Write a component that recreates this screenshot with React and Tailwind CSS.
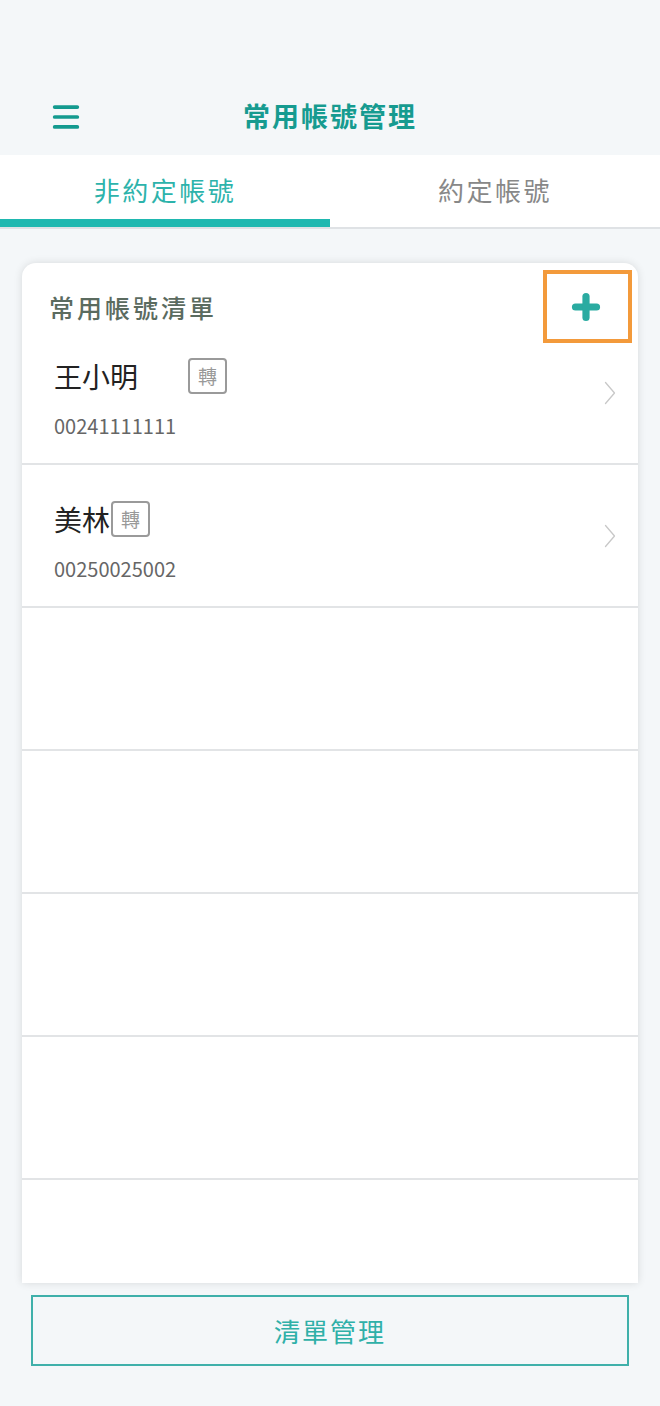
import { Menu, Plus } from 'lucide-react';

const accounts = [
    { name: '王小明', no: '00241111111', gap: 'ml-[50px]' },
    { name: '美林', no: '00250025002', gap: 'ml-[1px]' },
];

const Chevron = () => (
    <svg width="12" height="24" viewBox="0 0 12 24" fill="none" className="text-[#c8c8c8]">
        <path d="M1.5 1.5 L10.5 12 L1.5 22.5" stroke="currentColor" strokeWidth="1.3" strokeLinecap="round" strokeLinejoin="round" />
    </svg>
);

const Row = ({ item }) => (
    <div className="h-[143px] border-b-2 border-[#e2e4e6] flex items-center justify-between pl-[32px] pr-[22px]">
        {item ? (
            <div className="flex flex-col pt-[8px]">
                <div className="flex items-center h-[36px]">
                    <span className="text-[28px] text-[#222] leading-none">{item.name}</span>
                    <span className={`${item.gap} w-[39px] h-[36px] border-2 border-[#9a9a9a] rounded-[4px] flex items-center justify-center text-[19px] text-[#999] leading-none`}>
                        轉
                    </span>
                </div>
                <div className="mt-[22px] text-[20px] text-[#666] leading-none">{item.no}</div>
            </div>
        ) : <div />}
        {item && <Chevron />}
    </div>
);

export default function App() {
    const rows = [...accounts, null, null, null, null, null];

    return (
        <div
            className="h-[1406px] w-[660px] bg-[#f4f7f9] flex flex-col overflow-hidden"
            style={{ fontFamily: "'Noto Sans CJK TC', 'Noto Sans', sans-serif" }}
        >
            {/* Top bar */}
            <div className="h-[155px] shrink-0 relative flex items-end justify-center pb-[19px]">
                <Menu size={34} strokeWidth={2.6} className="absolute left-[49px] top-[100px] text-[#139a8f]" />
                <h1 className="text-[27px] font-bold text-[#169b90] tracking-[2px]">常用帳號管理</h1>
            </div>

            {/* Tabs */}
            <div className="h-[74px] shrink-0 bg-white flex border-b-2 border-[#dfe2e5]">
                <div className="flex-1 flex items-center justify-center text-[26px] text-[#2db3ab] tracking-[2.5px] border-b-[8px] border-[#1fb8b0] pt-[4px]">
                    非約定帳號
                </div>
                <div className="flex-1 flex items-center justify-center text-[26px] text-[#888] tracking-[2.5px] pb-[4px]">
                    約定帳號
                </div>
            </div>

            {/* List card */}
            <div className="flex-1 min-h-0 pt-[34px] px-[22px]">
                <div className="relative h-full bg-white rounded-t-[14px] shadow-[0_0_8px_rgba(0,0,0,0.12)] overflow-hidden">
                    <div className="h-[59px] flex items-end pl-[27px]">
                        <span className="text-[25px] font-medium text-[#5b6b5f] tracking-[3px] leading-none mb-[2px]">常用帳號清單</span>
                    </div>
                    <div className="absolute right-[6px] top-[7px] w-[89px] h-[73px] border-[4px] border-[#f39a3b] flex items-center justify-center">
                        <Plus size={36} strokeWidth={4.8} className="text-[#2aaba1] mr-[4px]" />
                    </div>
                    {rows.map((r, i) => (
                        <Row key={i} item={r} />
                    ))}
                </div>
            </div>

            {/* Bottom action */}
            <div className="h-[123px] shrink-0 bg-[#f4f7f9] px-[31px] pt-[12px]">
                <button className="w-full h-[71px] border-2 border-[#3fb0aa] flex items-center justify-center text-[26px] text-[#2fb0a8] tracking-[2px]">
                    清單管理
                </button>
            </div>
        </div>
    );
}
